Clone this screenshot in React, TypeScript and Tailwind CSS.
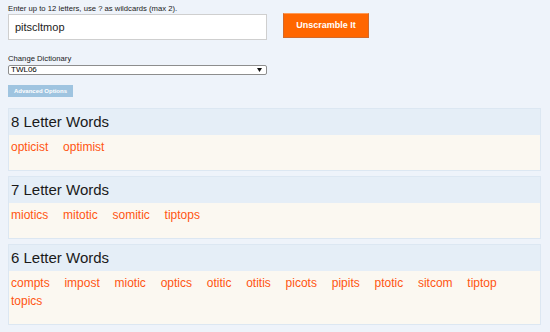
const groups = [
  { len: 8, words: ['opticist', 'optimist'] },
  { len: 7, words: ['miotics', 'mitotic', 'somitic', 'tiptops'] },
  {
    len: 6,
    words: ['compts', 'impost', 'miotic', 'optics', 'otitic', 'otitis', 'picots', 'pipits', 'ptotic', 'sitcom', 'tiptop', 'topics'],
  },
];

export default function App() {
  return (
    <div className="h-[332px] w-full overflow-hidden bg-[#eef3fa] pl-[8px] font-['Liberation_Sans',Arial,sans-serif]">
      <div className="pt-[4px] text-[7.7px] leading-[9px] text-[#222]">
        Enter up to 12 letters, use ? as wildcards (max 2).
      </div>

      <div className="flex items-start">
        <div className="mt-[1px] flex h-[26px] w-[259px] items-center border border-[#cfcfcf] bg-white pl-[6px] text-[11px] text-[#222]">
          pitscltmop
        </div>
        <button className="ml-[16px] flex h-[25px] w-[86px] items-center justify-center border border-[#d2692a] border-t-[#ff9a55] bg-[#ff6600] text-[9px] font-bold text-white">
          Unscramble It
        </button>
      </div>

      <div className="mt-[14px] text-[7.7px] leading-[9px] text-[#222]">Change Dictionary</div>
      <div className="mt-[2px] flex h-[10px] w-[259px] items-center justify-between rounded-[2px] border border-[#8d8d8d] bg-white pl-[2px] pr-[4px] text-[8px] leading-[8px] text-black">
        <span>TWL06</span>
        <svg width="5" height="4" viewBox="0 0 5 4">
          <path d="M0 0 H5 L2.5 4 Z" fill="#111" />
        </svg>
      </div>

      <button className="mt-[10px] flex h-[12px] w-[65px] items-center justify-center bg-[#9fc4e0] text-[6px] font-bold text-white">
        Advanced Options
      </button>

      <div className="mt-[11px] w-[533px]">
        {groups.map((g, i) => (
          <div key={g.len} className={`border border-[#dce7f2] ${i > 0 ? 'mt-[5px]' : ''}`}>
            <div className="h-[26px] bg-[#e5eef7] pl-[2px] text-[15px] leading-[26px] text-[#1a1a1a]">
              {g.len} Letter Words
            </div>
            <div className="flex flex-wrap bg-[#fbf8f1] pb-[14px] pl-[2px] pt-[3px] text-[12px] leading-[18px] text-[#ff5511]">
              {g.words.map((w) => (
                <span key={w} className="mr-[14.75px]">
                  {w}
                </span>
              ))}
            </div>
          </div>
        ))}
      </div>
    </div>
  );
}
